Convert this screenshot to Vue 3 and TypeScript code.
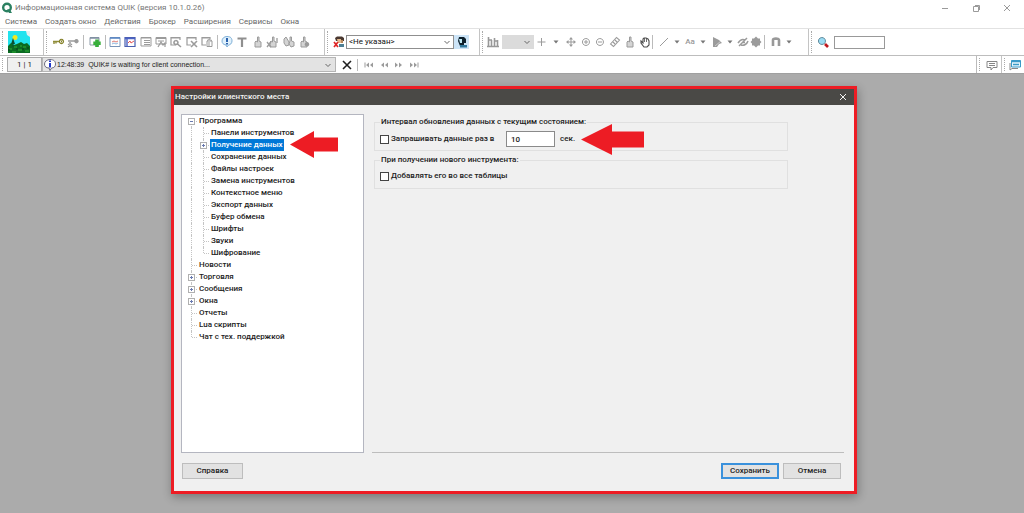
<script setup lang="ts">
import { h, ref } from 'vue'

type Shape = { d: string; f?: string; s?: string; w?: number }
const G = '#9b9b9b'
const fist = 'M4 7V12H10V7L8 6V2H6.500V7L5 6Z'

const icons: Record<string, Shape[]> = {
  key: [
    { d: 'M2 6.500H9M3 7V9M5 7V8.500', s: '#8f8c38', w: 1.4 },
    { d: 'M10.500 4.500A2 2 0 1 1 10.400 4.500M10 6.500H11', s: '#86822b', w: 1.3 },
  ],
  unkey: [
    { d: 'M2 6H9M2 9L6 12M6 9L2 12M3 8H5', s: G, w: 1.3 },
    { d: 'M10.500 4A2.200 2.200 0 1 1 10.400 4', f: G },
  ],
  add: [
    { d: 'M2 2.500H11V10H2Z', f: '#fff', s: '#8c9aa8', w: 1 },
    { d: 'M2 3H11', s: '#7d8da0', w: 1.5 },
    { d: 'M9 4.500V12M5.300 8.300H12.700', s: '#38ae3b', w: 3.6 },
  ],
  chart: [
    { d: 'M2 2.500H12V11.500H2Z', f: '#fff', s: '#7894b8', w: 1 },
    { d: 'M2 3H12', s: '#5b87c4', w: 1.6 },
    { d: 'M4 7L6 6L8 7L10 6', s: '#e07a72', w: 1 },
    { d: 'M4 9L6 8L8 9L10 8', s: '#8cb6de', w: 1 },
  ],
  board: [
    { d: 'M2 2.500H12V11.500H2Z', f: '#fff', s: '#4a5fb0', w: 1.2 },
    { d: 'M2 3.500H12M4 4V11', s: '#4b62c4', w: 1.4 },
    { d: 'M5 8L7 6L8 8L11 6', s: '#e45555', w: 1 },
  ],
  list: [
    { d: 'M2 2.500H12V11H2Z', s: G, w: 1 },
    { d: 'M2 3H12M5 5.500H11M5 7.500H11M5 9.500H11', s: G, w: 1 },
  ],
  screen: [
    { d: 'M2 2.500H12V9H2Z', s: G, w: 1 },
    { d: 'M2 3.500H12M4 6H10M4 12L7 7L9 10L11 8V12', s: G, w: 1.2 },
  ],
  find: [
    { d: 'M11 5V2.500H2V10H7M2 3H11', s: G, w: 1.2 },
    { d: 'M7 5.500A2 2 0 1 1 6.900 5.500M8.500 9L12 12', s: G, w: 1.6 },
  ],
  close: [
    { d: 'M11 5V2.500H2V10H6M2 3H11', s: G, w: 1.2 },
    { d: 'M6 6L12 12M12 6L6 12', s: G, w: 1.6 },
  ],
  bin: [
    { d: 'M10 4V2.500H2V10H6M2 3H10', s: G, w: 1.2 },
    { d: 'M7 6V11.500H12V6ZM7 5.500L9 4.500L12 5.500M9 7V11', s: G, w: 1 },
  ],
  bubble: [
    { d: 'M7 1.500C11 1.500 12 3.500 12 6C12 8.500 10 10 8.500 10L7 12L6 10C3 9.500 2 8 2 6C2 3.500 4 1.500 7 1.500Z', f: '#dff0fb', s: '#7fb0d8', w: 1 },
    { d: 'M7 3V7M7 8V9.500', s: '#2a62ae', w: 2 },
  ],
  text: [{ d: 'M2.500 3.500H11.500M7 3V12', s: '#8f8f8f', w: 2.2 }],
  hand: [{ d: fist, f: '#d4d4d4', s: G, w: 1 }],
  handx: [{ d: fist, f: '#d4d4d4', s: G, w: 1 }, { d: 'M1 7L5 12M5 7L1 12M11 3V8', s: G, w: 1.3 }],
  hands: [
    { d: 'M2 4L4 2L7 7V10L4 11L2 8Z', f: '#d4d4d4', s: G, w: 1 },
    { d: 'M8 6V2H9.500V6L12 7V11L9 12L7 9Z', f: '#d4d4d4', s: G, w: 1 },
  ],
  handdot: [{ d: fist, f: '#d4d4d4', s: G, w: 1 }, { d: 'M10 7A2.300 2.300 0 1 1 9.900 7', f: G }],
  client: [
    { d: 'M3 3L5 1.500H10L12 3V6H4Z', f: '#4a3830' },
    { d: 'M5 4H9V8H6Z', f: '#e3b98c' },
    { d: 'M9 5H11V8H9Z', f: '#b98a5d' },
    { d: 'M7 9H12V12H7Z', f: '#4e7f93' },
    { d: 'M2 7L6 12M6 7L2 12', s: '#e02626', w: 1.7 },
  ],
  person: [
    { d: 'M4 2H9L11 4V8H9V11H5L3 6Z', f: '#0d202c' },
    { d: 'M4 4H7V8H5Z', f: '#bfeaf7' },
    { d: 'M5 10H12V12.500H5Z', f: '#2e769b' },
  ],
  bars: [{ d: 'M2.500 2V12M5.500 5V12M8.500 3V12M11.500 5V12M1 11.500H13M3 5H6M8 6H12', s: '#989898', w: 1.6 }],
  plus: [{ d: 'M7.500 3V11M3.500 7H11.500', s: G, w: 1 }],
  caret: [{ d: 'M4.500 5.500H9.500L7 8.500Z', f: '#777' }],
  move: [
    { d: 'M7 3V11M3 7H11', s: G, w: 1 },
    { d: 'M7 2L9 4.500H5ZM7 12L9 9.500H5ZM2 7L4.500 5V9ZM12 7L9.500 5V9Z', f: G },
  ],
  zoomin: [{ d: 'M7 3.500A3.500 3.500 0 1 1 6.900 3.500M5 7H9M7 5V9', s: G, w: 1 }],
  zoomout: [{ d: 'M7 3.500A3.500 3.500 0 1 1 6.900 3.500M5 7H9', s: G, w: 1 }],
  ruler: [{ d: 'M2.500 9L8.500 2.500L11.500 5L5.500 11.500ZM5 7L7 9M7 5L9 7', s: G, w: 1.1 }],
  grab: [
    { d: 'M3 6L5 8V4L6 3L8 3L10 4L11 6V10L9 12H6L3 8Z', f: '#fff', s: '#4c4c4c', w: 1.1 },
    { d: 'M6.500 3V7M8.500 3V7', s: '#4c4c4c', w: 0.8 },
  ],
  line: [{ d: 'M3 11L11 3', s: G, w: 1 }],
  figure: [{ d: 'M3 2V12H7L9 9L12 8L9 5Z', f: G }, { d: 'M5 11L11 6', s: '#d7d7d7', w: 0.8 }],
  eye: [{ d: 'M2 8C4 5 7 4 9 5M5 10C8 11 11 9 12 6M3 11L11 3M6 7.500H9', s: G, w: 1.5 }],
  gem: [{ d: 'M7 1.500L9 3.500H11V5.500L12.500 7L11 8.500V10.500H9L7 12.500L5 10.500H3V8.500L1.500 7L3 5.500V3.500H5Z', f: G }],
  magnet: [{ d: 'M4 11V5C4 3 10 3 10 5V11', s: '#999', w: 2.6 }],
  search: [
    { d: 'M6 2.500A3.500 3.500 0 1 1 5.900 2.500', f: '#9bdcf4', s: '#608a9b', w: 1 },
    { d: 'M9 9L12 12', s: '#bd171d', w: 2.6 },
  ],
  info: [
    { d: 'M7 1.500C11 1.500 12.500 3.500 12.500 6C12.500 8.500 11 10 8.500 10L7 12.500L6 10C3 10 1.500 8.500 1.500 6C1.500 3.500 4 1.500 7 1.500Z', f: '#fff', s: '#6d6d80', w: 1 },
    { d: 'M7 2.500V4M7 5V9.500', s: '#2037c8', w: 2 },
  ],
  cross: [{ d: 'M3 3L11 11M11 3L3 11', s: '#202020', w: 1.6 }],
  first: [{ d: 'M3 4.500V9.500', s: G, w: 1 }, { d: 'M7 4.500V9.500L4 7ZM11 4.500V9.500L8 7Z', f: G }],
  back: [{ d: 'M7 4.500V9.500L4 7ZM11 4.500V9.500L8 7Z', f: G }],
  next: [{ d: 'M3 4.500V9.500L6 7ZM7 4.500V9.500L10 7Z', f: G }],
  last: [{ d: 'M3 4.500V9.500L6 7ZM7 4.500V9.500L10 7Z', f: G }, { d: 'M11 4.500V9.500', s: G, w: 1 }],
  chat: [{ d: 'M2 3.500H12V9.500H8L6 12V9.500H2ZM4 5.500H10M4 7.500H10', s: '#868686', w: 1 }],
  chats: [
    { d: 'M2 5V12L4 10.500H10', s: '#888', w: 1 },
    { d: 'M3.500 2.500H12.500V9H3.500Z', f: '#e8f6fd', s: '#3a9ac8', w: 1 },
    { d: 'M3 3.500H13M5 6.500H11', s: '#3a9ac8', w: 1.5 },
  ],
  min: [{ d: 'M4 7.500H10', s: '#9a9a9a', w: 1 }],
  restore: [{ d: 'M4.500 5.500H9.500V10.500H4.500ZM6 4.500H10.500V9', s: '#9a9a9a', w: 1 }],
  x: [{ d: 'M4 4L10 10M10 4L4 10', s: 'currentColor', w: 1 }],
  down: [{ d: 'M4.500 6L7 8.500L9.500 6', s: '#666', w: 1 }],
}

const Icon = (props: { name: string }) =>
  h('svg', { class: 'icon', viewBox: '0 0 14 14', 'aria-hidden': 'true' },
    icons[props.name].map((p) =>
      h('path', { d: p.d, fill: p.f ?? 'none', stroke: p.s ?? 'none', 'stroke-width': p.w ?? 0 })))
Icon.props = ['name']

const menu = ['Система', 'Создать окно', 'Действия', 'Брокер', 'Расширения', 'Сервисы', 'Окна']
const mainTools = [
  { size: 'g2', items: ['key', 'unkey'] },
  { size: 'g1', items: ['add'] },
  { size: 'g7', items: ['chart', 'board', 'list', 'screen', 'find', 'close', 'bin'] },
  { size: 'g6', items: ['bubble', 'text', 'hand', 'handx', 'hands', 'handdot'] },
]
const drawTools = [
  { size: 'd1', items: ['plus', 'caret', 'move', 'zoomin', 'zoomout', 'ruler', 'hand', 'grab'] },
  { size: 'd2', items: ['line', 'caret', 'Aa', 'caret', 'figure', 'caret', 'eye', 'gem'] },
  { size: 'd3', items: ['magnet', 'caret'] },
]
const nav = ['first', 'back', 'next', 'last']

type Node = { name: string; level: number; box?: string; last?: boolean }
const nodes: Node[] = [
  { name: 'Программа', level: 0, box: '−' },
  { name: 'Панели инструментов', level: 1 },
  { name: 'Получение данных', level: 1, box: '+' },
  { name: 'Сохранение данных', level: 1 },
  { name: 'Файлы настроек', level: 1 },
  { name: 'Замена инструментов', level: 1 },
  { name: 'Контекстное меню', level: 1 },
  { name: 'Экспорт данных', level: 1 },
  { name: 'Буфер обмена', level: 1 },
  { name: 'Шрифты', level: 1 },
  { name: 'Звуки', level: 1 },
  { name: 'Шифрование', level: 1, last: true },
  { name: 'Новости', level: 0 },
  { name: 'Торговля', level: 0, box: '+' },
  { name: 'Сообщения', level: 0, box: '+' },
  { name: 'Окна', level: 0, box: '+' },
  { name: 'Отчеты', level: 0 },
  { name: 'Lua скрипты', level: 0 },
  { name: 'Чат с тех. поддержкой', level: 0, last: true },
]
const selected = ref('Получение данных')
const poll = ref(false)
const addAll = ref(false)
const seconds = ref('10')
const query = ref('')
</script>

<template>
  <div class="app">
    <header class="title">
      <svg class="logo" viewBox="0 0 12 12" aria-hidden="true">
        <circle cx="6" cy="5.500" r="3.800" fill="none" stroke="#2b8061" stroke-width="2.400" />
        <path d="M6 7.500L8 11H11L8.500 7Z" fill="#2b8061" />
      </svg>
      <span class="caption">Информационная система QUIK (версия 10.1.0.26)</span>
      <div class="controls">
        <button aria-label="Свернуть"><Icon name="min" /></button>
        <button aria-label="Восстановить"><Icon name="restore" /></button>
        <button aria-label="Закрыть"><Icon name="x" /></button>
      </div>
    </header>
    <nav class="menu"><button v-for="m in menu" :key="m">{{ m }}</button></nav>

    <div class="toolbar">
      <div class="band picture">
        <svg viewBox="0 0 22 22" aria-hidden="true">
          <path d="M0 0H22V22H0Z" fill="#22e3ee" />
          <circle cx="7" cy="6.500" r="2.500" fill="#f2e820" />
          <path d="M18 0H22V6L19 4Z" fill="#e8f0f0" />
          <path d="M0 15L3 12L6 14L9 13L13 11L16 13L19 12L22 15V22H0Z" fill="#0a6a22" />
          <path d="M3 13L5 7L7 13ZM4.500 12H5.500V16H4.500Z" fill="#0b4f30" />
          <path d="M1 18H4M6 16H9M10 19H14M15 16H18M17 20H21M4 21H8M12 15H14" stroke="#2fae34" />
          <path d="M0 19H2M8 18H10M14 18H16M19 17H21" stroke="#053d18" />
        </svg>
      </div>
      <div class="band main">
        <div v-for="g in mainTools" :key="g.size" class="group" :class="g.size">
          <button v-for="i in g.items" :key="i" :aria-label="i"><Icon :name="i" /></button>
        </div>
      </div>
      <div class="band client">
        <Icon name="client" />
        <div class="combo">
          <select aria-label="Клиент"><option>&lt;Не указан&gt;</option></select>
          <Icon name="down" />
        </div>
        <button class="active" aria-label="Клиент"><Icon name="person" /></button>
      </div>
      <div class="band draw">
        <Icon name="bars" />
        <div class="combo off">
          <select disabled aria-label="Интервал"><option></option></select>
          <Icon name="down" />
        </div>
        <div v-for="g in drawTools" :key="g.size" class="group" :class="g.size">
          <button v-for="(i, n) in g.items" :key="n" :aria-label="i">
            <span v-if="i === 'Aa'" class="aa">Aa</span>
            <Icon v-else :name="i" />
          </button>
        </div>
      </div>
      <div class="band search">
        <Icon name="search" />
        <input v-model="query" type="text" aria-label="Поиск" />
      </div>
    </div>

    <div class="status">
      <div class="band log">
        <button class="count">1 | 1</button>
        <div class="message">
          <Icon name="info" />
          <span>12:48:39&nbsp; QUIK# is waiting for client connection...</span>
          <Icon name="down" />
        </div>
        <button class="clear" aria-label="Очистить"><Icon name="cross" /></button>
        <div class="nav"><button v-for="n in nav" :key="n" :aria-label="n"><Icon :name="n" /></button></div>
      </div>
      <div class="band note"><Icon name="chat" /></div>
      <div class="band note"><Icon name="chats" /></div>
    </div>

    <main class="workspace">
      <section class="dialog" role="dialog" aria-label="Настройки клиентского места">
        <header class="dialog-title">
          <span>Настройки клиентского места</span>
          <button aria-label="Закрыть"><Icon name="x" /></button>
        </header>
        <div class="dialog-body">
          <div class="columns">
            <ul class="tree">
              <li v-for="n in nodes" :key="n.level + n.name" :class="['level' + n.level, { last: n.last }]">
                <span v-if="n.level === 1" class="rail"></span>
                <span class="branch"><i v-if="n.box" class="box" :class="{ open: n.box === '−' }"></i></span>
                <button :class="{ selected: n.level === 1 && n.name === selected }" @click="selected = n.name">{{ n.name }}</button>
                <svg v-if="n.name === 'Получение данных'" class="pointer small" viewBox="0 0 48 27" aria-hidden="true">
                  <path d="M0 13.500L24 0V6.500H48V20.500H24V27Z" fill="#ed1c24" />
                </svg>
              </li>
            </ul>
            <div class="options">
              <fieldset>
                <legend>Интервал обновления данных с текущим состоянием:</legend>
                <div class="line">
                  <label class="check wide"><input v-model="poll" type="checkbox" />Запрашивать данные раз в</label>
                  <input id="seconds" v-model="seconds" class="seconds" type="text" />
                  <label for="seconds">сек.</label>
                  <svg class="pointer big" viewBox="0 0 63 31" aria-hidden="true">
                    <path d="M0 15.500L31 0V7.500H63V23.500H31V31Z" fill="#ed1c24" />
                  </svg>
                </div>
              </fieldset>
              <fieldset>
                <legend>При получении нового инструмента:</legend>
                <div class="line">
                  <label class="check"><input v-model="addAll" type="checkbox" />Добавлять его во все таблицы</label>
                </div>
              </fieldset>
            </div>
          </div>
          <footer class="actions">
            <button class="help">Справка</button>
            <button class="primary">Сохранить</button>
            <button>Отмена</button>
          </footer>
        </div>
      </section>
    </main>
  </div>
</template>

<style>
body { margin: 0; }
</style>

<style scoped>
.app {
  display: flex;
  flex-direction: column;
  min-height: 100vh;
  background: #fff;
  color: #222;
  font: 500 8px/12px Roboto, "Open Sans", sans-serif;
}
.app *, .app *::before, .app *::after { box-sizing: border-box; }
button, input, select { font: inherit; color: inherit; margin: 0; padding: 0; border: 0; background: none; border-radius: 0; appearance: none; }
button { display: flex; align-items: center; justify-content: center; white-space: nowrap; }
.icon { width: 14px; height: 14px; flex: none; display: block; }

.title { display: flex; align-items: center; height: 15px; padding-left: 1px; color: #777; }
.logo { width: 12px; height: 12px; }
.caption { flex: 1; padding-left: 2px; font-weight: 400; }
.controls { display: flex; margin-right: 2px; }
.controls button { width: 31px; height: 15px; color: #9a9a9a; }
.menu { display: flex; gap: 8px; height: 13px; padding-left: 5px; }
.menu button { color: #666; font-weight: 400; }

.toolbar, .status { display: flex; border-top: 1px solid #e2e2e2; }
.toolbar { height: 27px; }
.status { height: 18px; border-top-color: #bdbdbd; }
.band { display: flex; align-items: center; padding-left: 8px; border-right: 1px solid #c4c4c4; position: relative; }
.band::before { content: ""; position: absolute; left: 2px; top: 2px; bottom: 2px; border-left: 1px dotted #aaa; }
.picture { width: 44px; }
.picture svg { width: 22px; height: 22px; }
.main { width: 281px; padding-left: 6px; }
.client { width: 155px; padding-left: 7px; }
.draw { width: 329px; padding-left: 6px; }
.search { flex: 1; padding-left: 7px; border-right: 0; gap: 4px; }
.search input { width: 51px; height: 13px; border: 1px solid #999; padding: 0 2px; }

.group { display: flex; align-items: center; height: 14px; }
.group button { flex: 1 1 0; min-width: 0; }
.group + .group { border-left: 1px solid #bbb; }
.g2 { width: 33px; padding-right: 3px; }
.g1 { width: 22px; padding: 0 3px; }
.g7 { width: 112px; padding: 0 2px 0 1px; }
.g6 { width: 95px; padding-left: 1px; }
.d1 { width: 118px; }
.d2 { width: 112px; padding: 0 1px 0 4px; }
.d3 { width: 32px; padding-left: 4px; }
.aa { color: #999; }

.combo { display: flex; position: relative; width: 108px; height: 14px; }
.combo select { flex: 1; min-width: 0; border: 1px solid #8f8f8f; padding-left: 2px; font-weight: 400; line-height: 12px; color: #111; }
.combo .icon { position: absolute; right: 0; top: 0; pointer-events: none; }
.combo.off { width: 32px; margin-left: 2px; }
.combo.off select { border-color: #ccc; background: #ccc; }
.active { width: 15px; height: 14px; background: #cce4f7; }

.log { flex: 1; padding-left: 7px; border-right-color: #bbb; }
.count { width: 35px; height: 15px; border: 1px solid #aaa; background: #f0f0f0; font-weight: 400; }
.message { display: flex; align-items: center; width: 294px; height: 15px; border: 1px solid #b5b5b5; background: #e3e3e3; font: 400 7px/12px "Liberation Sans", Arial, sans-serif; }
.message span { flex: 1; }
.clear { width: 22px; height: 12px; border-right: 1px solid #bbb; }
.nav { display: flex; padding-left: 3px; }
.nav button { width: 15px; }
.note { width: 25px; }
.note:last-child { width: 22px; padding-left: 6px; border-right: 0; }

.workspace { flex: 1; display: flex; padding: 12px 167px 19px 171px; background: #ababab; border-top: 1px solid #a0a0a0; }
.dialog { flex: 1; display: flex; flex-direction: column; border: 3px solid #ed1c24; background: #f0f0f0; box-shadow: 1px 3px 9px rgba(0, 0, 0, .3); }
.dialog-title { display: flex; align-items: center; height: 16px; background: #4a4946; color: #f2f2f2; padding-left: 1px; }
.dialog-title span { flex: 1; }
.dialog-title button { width: 22px; height: 14px; }
.dialog-body { flex: 1; display: flex; flex-direction: column; padding: 9px 10px 12px 7px; }
.columns { flex: 1; display: flex; gap: 8px; }
.tree { width: 183px; margin: 0; padding: 0 0 0 5px; list-style: none; border: 1px solid #b4b6c0; background: #fff; }
.tree li { display: flex; align-items: center; height: 12px; position: relative; }
.rail, .branch { position: relative; align-self: stretch; width: 12px; flex: none; }
.branch { width: 11px; }
.branch::before, .rail::before { content: ""; position: absolute; left: 4px; top: 0; bottom: 0; border-left: 1px dotted #c4c4c4; }
.branch::after { content: ""; position: absolute; left: 5px; right: 1px; top: 6px; border-top: 1px dotted #c4c4c4; }
.tree li:first-child .branch::before { top: 6px; }
.last .branch::before { bottom: 6px; }
.box { position: absolute; z-index: 1; left: 1px; top: 3px; width: 7px; height: 7px; border: 1px solid #b0b0b0; background: #fff; }
.box::before { content: ""; position: absolute; left: 1px; right: 1px; top: 2px; border-top: 1px solid #6a7bb0; }
.box::after { content: ""; position: absolute; top: 1px; bottom: 1px; left: 2px; border-left: 1px solid #6a7bb0; }
.box.open::after { display: none; }
.tree button { height: 12px; padding: 0 1px; }
.tree .selected { background: #0078d7; color: #fff; }
.pointer { position: absolute; z-index: 2; }
.pointer.small { left: 103px; top: -8px; width: 48px; height: 27px; }
.pointer.big { left: 201px; top: -7px; width: 63px; height: 31px; }

.options { flex: 1; padding: 2px 56px 0 2px; border-bottom: 1px solid #bdbdbd; }
fieldset { margin: 0 0 3px; padding: 0 5px 2px; border: 1px solid #e0e0e0; height: 35px; min-width: 0; }
legend { padding: 0 1px; height: 12px; }
.line { display: flex; align-items: center; height: 16px; margin-top: 3px; position: relative; }
fieldset + fieldset .line { margin-top: 2px; }
.check { display: flex; align-items: center; gap: 2px; }
.check.wide { width: 126px; }
.check input { width: 9px; height: 9px; border: 1px solid #444; background: #fff; }
.check input:checked { background: #0078d7; }
.seconds { width: 49px; height: 16px; margin-right: 5px; padding: 0 4px; border: 1px solid #8a8a8a; background: #fff; }
.actions { display: flex; gap: 4px; padding: 10px 3px 0 1px; }
.actions button { width: 58px; height: 16px; border: 1px solid #bdbdbd; background: #e2e2e2; }
.actions .help { width: 61px; margin-right: auto; }
.actions .primary { border: 2px solid #3a91dc; }
</style>
